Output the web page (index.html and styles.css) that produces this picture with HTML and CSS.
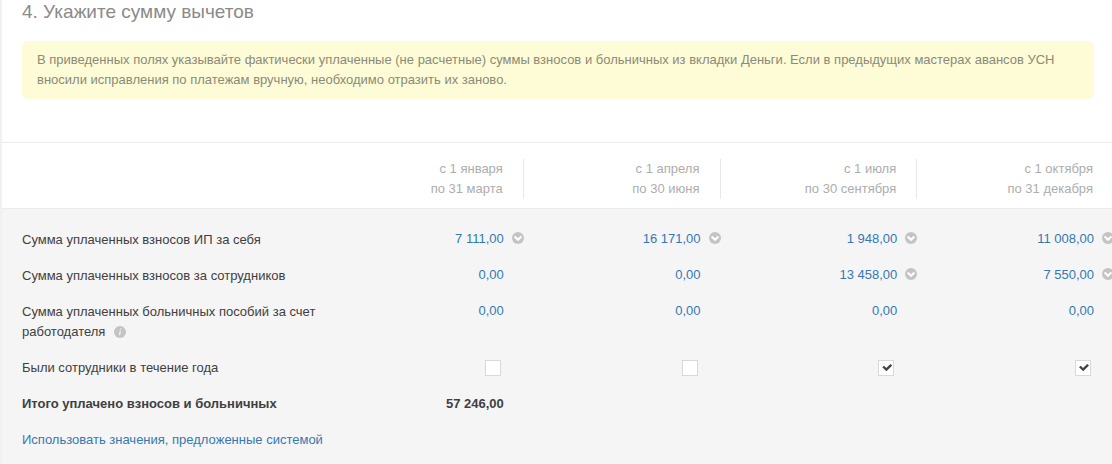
FILE: index.html
```
<!doctype html>
<html lang="ru">
    <head>
        <meta charset="utf-8">
        <title>Укажите сумму вычетов</title>
        <link rel="stylesheet" href="styles.css">
    </head>
    <body>
        <svg class="sprite" aria-hidden="true">
            <symbol id="chevron" viewBox="0 0 12 12">
                <circle cx="6" cy="6" r="6" fill="#c4c4c4"/>
                <path d="M2.6 4.4 6 7.7l3.4-3.3" fill="none" stroke="#fff" stroke-width="2.1"/>
            </symbol>
        </svg>
        <main class="step">
            <h2 class="title">4. Укажите сумму вычетов</h2>
            <p class="note">В приведенных полях указывайте фактически уплаченные (не расчетные) суммы взносов и больничных из вкладки Деньги. Если в предыдущих мастерах авансов УСН вносили исправления по платежам вручную, необходимо отразить их заново.</p>
            <table class="deductions">
                <thead>
                    <tr>
                        <td class="name"></td>
                        <th id="q1"><div class="period">с 1 января<br>по 31 марта</div></th>
                        <th id="q2"><div class="period">с 1 апреля<br>по 30 июня</div></th>
                        <th id="q3"><div class="period">с 1 июля<br>по 30 сентября</div></th>
                        <th id="q4"><div class="period">с 1 октября<br>по 31 декабря</div></th>
                    </tr>
                </thead>
                <tbody>
                    <tr class="first">
                        <th class="name">Сумма уплаченных взносов ИП за себя</th>
                        <td class="with-more"><a href="#">7 111,00</a><button class="more" aria-label="Подробнее"><svg><use href="#chevron"/></svg></button></td>
                        <td class="with-more"><a href="#">16 171,00</a><button class="more" aria-label="Подробнее"><svg><use href="#chevron"/></svg></button></td>
                        <td class="with-more"><a href="#">1 948,00</a><button class="more" aria-label="Подробнее"><svg><use href="#chevron"/></svg></button></td>
                        <td class="with-more"><a href="#">11 008,00</a><button class="more" aria-label="Подробнее"><svg><use href="#chevron"/></svg></button></td>
                    </tr>
                    <tr>
                        <th class="name">Сумма уплаченных взносов за сотрудников</th>
                        <td><a href="#">0,00</a></td>
                        <td><a href="#">0,00</a></td>
                        <td class="with-more"><a href="#">13 458,00</a><button class="more" aria-label="Подробнее"><svg><use href="#chevron"/></svg></button></td>
                        <td class="with-more"><a href="#">7 550,00</a><button class="more" aria-label="Подробнее"><svg><use href="#chevron"/></svg></button></td>
                    </tr>
                    <tr>
                        <th class="name">Сумма уплаченных больничных пособий за счет работодателя
                            <button class="info" aria-label="Справка">
                                <svg viewBox="0 0 12 12">
                                    <circle cx="6" cy="6" r="6" fill="#c4c4c4"/>
                                    <path d="M6.3 5 5.5 9.2M6.7 2.6 6.5 3.8" stroke="#f5f5f5" stroke-width="1.3"/>
                                </svg>
                            </button>
                        </th>
                        <td><a href="#">0,00</a></td>
                        <td><a href="#">0,00</a></td>
                        <td><a href="#">0,00</a></td>
                        <td><a href="#">0,00</a></td>
                    </tr>
                    <tr>
                        <th class="name" id="staff">Были сотрудники в течение года</th>
                        <td><input type="checkbox" class="check" aria-labelledby="staff q1"></td>
                        <td><input type="checkbox" class="check" aria-labelledby="staff q2"></td>
                        <td><input type="checkbox" class="check" aria-labelledby="staff q3" checked></td>
                        <td><input type="checkbox" class="check" aria-labelledby="staff q4" checked></td>
                    </tr>
                    <tr class="total">
                        <th class="name">Итого уплачено взносов и больничных</th>
                        <td>57 246,00</td>
                        <td></td>
                        <td></td>
                        <td></td>
                    </tr>
                    <tr>
                        <td class="name" colspan="5"><a href="#">Использовать значения, предложенные системой</a></td>
                    </tr>
                </tbody>
            </table>
        </main>
    </body>
</html>
```
FILE: styles.css
```
* {
    box-sizing: border-box;
}

html {
    background: #f5f5f5;
}

body {
    margin: 0;
    font-family: "Liberation Sans", Arial, sans-serif;
    font-size: 13px;
    line-height: 20px;
    color: #404040;
    overflow: hidden;
}

a {
    color: #3678b3;
    text-decoration: none;
}

a:hover {
    text-decoration: underline;
}

.sprite {
    display: none;
}

.step {
    min-height: 100vh;
    margin-right: -2px;
    background: #fff;
    border-left: 2px solid #f1f1f1;
}

.title {
    margin: 0 20px 17px;
    font-size: 19px;
    line-height: 24px;
    font-weight: normal;
    color: #8a8a8a;
}

.note {
    margin: 0 20px 43px;
    padding: 9px 15px;
    color: #8c8a78;
    background: #fdfcd7;
    border-radius: 6px;
}

.deductions {
    width: 100%;
    table-layout: fixed;
    border-collapse: separate;
    border-spacing: 0;
}

th,
td {
    padding: 8px 20px 8px 0;
    font-weight: normal;
    text-align: right;
    vertical-align: top;
}

.name {
    width: 325px;
    padding: 9px 8px 7px 20px;
    text-align: left;
}

thead th,
thead td {
    padding: 16px 0 9px;
    border-top: 1px solid #ebebeb;
    border-bottom: 1px solid #ebebeb;
}

.period {
    padding-right: 20px;
    color: #adadad;
    border-right: 1px solid #e9e9e9;
}

thead th:last-child .period {
    border-right-color: transparent;
}

tbody {
    background: #f5f5f5;
}

.first td {
    padding-top: 20px;
}

.first .name {
    padding-top: 21px;
}

tbody tr:last-child .name {
    padding-bottom: 20px;
}

tbody .with-more {
    padding-right: 0;
}

.more,
.info {
    width: 12px;
    height: 12px;
    margin: 0 0 0 8px;
    padding: 0;
    border: none;
    background: none;
    vertical-align: -1px;
    cursor: pointer;
}

.info {
    margin-left: 5px;
    vertical-align: -2px;
}

.more svg,
.info svg {
    display: block;
    width: 12px;
    height: 12px;
}

.check {
    appearance: none;
    display: block;
    width: 16px;
    height: 16px;
    margin: 3px 3px 1px auto;
    background: #fff;
    border: 1px solid #d9d9d9;
}

.check:checked::before {
    content: "";
    display: block;
    width: 10px;
    height: 8px;
    margin: 3px;
    background: #444;
    clip-path: polygon(0 40%, 18% 22%, 40% 50%, 82% 0, 100% 18%, 42% 92%);
}

.total th,
.total td {
    font-weight: bold;
}

.total td {
    padding-top: 9px;
    padding-bottom: 7px;
}
```
